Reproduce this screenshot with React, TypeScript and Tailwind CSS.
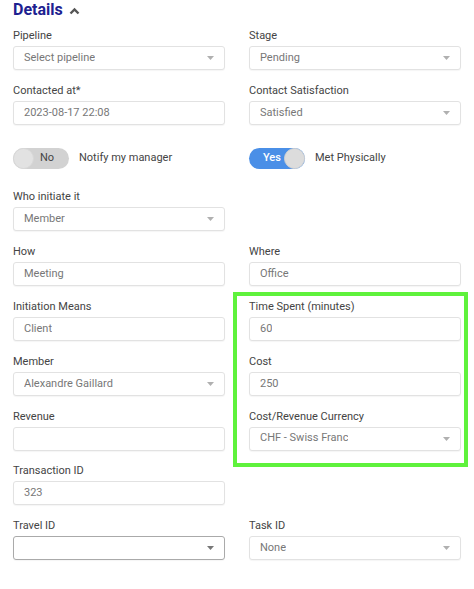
import type { ReactNode } from "react";

const font = { fontFamily: "Roboto, 'Liberation Sans', Arial, sans-serif" };

function Label({ children }: { children: ReactNode }) {
  return <div className="text-[11px] leading-[14px] text-[#444] mb-[3px]">{children}</div>;
}

function Arrow({ dark }: { dark?: boolean }) {
  return (
    <svg width="7" height="4" viewBox="0 0 7 4" className="shrink-0">
      <path d="M0 0h7L3.5 4z" fill={dark ? "#777" : "#b0b0b0"} />
    </svg>
  );
}

function Field({ label, value, select, dark }: { label: string; value?: string; select?: boolean; dark?: boolean }) {
  return (
    <div className="h-[41px]">
      <Label>{label}</Label>
      <div
        className={
          "h-[24px] flex items-center justify-between pl-[10px] pr-[10px] rounded-[3px] border bg-white text-[11px] text-[#777] shadow-[0_1px_1px_rgba(0,0,0,0.04)] " +
          (dark ? "border-[#aaa]" : "border-[#e2e2e2]")
        }
      >
        <span className="truncate">{value}</span>
        {select && <Arrow dark={dark} />}
      </div>
    </div>
  );
}

function Toggle({ on, text }: { on: boolean; text: string }) {
  return (
    <div className="flex items-center gap-[10px]">
      {on ? (
        <div className="w-[56px] h-[21px] rounded-full bg-[#4a8fe7] flex items-center justify-between pl-[14px]">
          <span className="text-[11px] font-medium text-white">Yes</span>
          <span className="w-[21px] h-[21px] rounded-full bg-[#dcdcdc] border border-[#d2d2d2]" />
        </div>
      ) : (
        <div className="w-[56px] h-[21px] rounded-full bg-[#d2d2d2] flex items-center">
          <span className="w-[21px] h-[21px] rounded-full bg-[#e2e2e2] border border-[#d8d8d8]" />
          <span className="text-[11px] text-[#444] ml-[6px]">No</span>
        </div>
      )}
      <span className="text-[11px] text-[#444]">{text}</span>
    </div>
  );
}

export default function App() {
  return (
    <div className="w-[474px] h-[589px] bg-white overflow-hidden pl-[13px]" style={font}>
      <div className="flex items-center gap-[6px] h-[20px]">
        <span className="text-[16px] leading-[20px] font-bold text-[#1d2190]">Details</span>
        <svg width="11" height="8" viewBox="0 0 11 8" className="mt-[1px]">
          <path d="M1.5 6.5L5.5 2.5l4 4" stroke="#555" strokeWidth="2.4" fill="none" />
        </svg>
      </div>

      <div className="grid grid-cols-[212px_212px] gap-x-[24px] gap-y-[13.8px] mt-[9px]">
        <Field label="Pipeline" value="Select pipeline" select />
        <Field label="Stage" value="Pending" select />

        <Field label="Contacted at*" value="2023-08-17 22:08" />
        <Field label="Contact Satisfaction" value="Satisfied" select />

        <div className="mt-[9px] mb-[8px]">
          <Toggle on={false} text="Notify my manager" />
        </div>
        <div className="mt-[9px] mb-[8px]">
          <Toggle on text="Met Physically" />
        </div>

        <Field label="Who initiate it" value="Member" select />
        <div />

        <Field label="How" value="Meeting" />
        <Field label="Where" value="Office" />

        <Field label="Initiation Means" value="Client" />
        <div className="row-span-3 relative">
          <div className="absolute left-[-16px] right-[-7px] top-[-8px] bottom-[-16px] border-[4px] border-[#5ff23c] pointer-events-none" />
          <div className="flex flex-col gap-[13.8px]">
            <Field label="Time Spent (minutes)" value="60" />
            <Field label="Cost" value="250" />
            <Field label="Cost/Revenue Currency" value="CHF - Swiss Franc" select />
          </div>
        </div>

        <Field label="Member" value="Alexandre Gaillard" select />
        <Field label="Revenue" value="" />

        <Field label="Transaction ID" value="323" />
        <div />

        <Field label="Travel ID" value="" select dark />
        <Field label="Task ID" value="None" select />
      </div>
    </div>
  );
}
